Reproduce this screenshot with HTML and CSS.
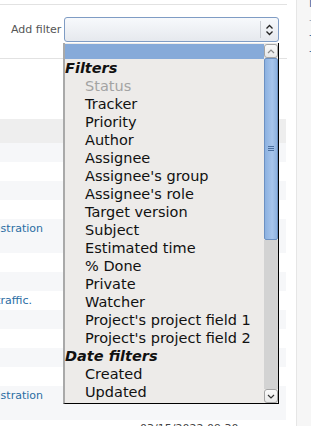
FILE: index.html
```html
<!DOCTYPE html>
<html lang="en">
<head>
<meta charset="utf-8">
<title>Issues</title>
<link rel="stylesheet" href="styles.css">
</head>
<body>
<div class="page">
  <div class="main">
    <div class="filters">
      <span class="add-label">Add filter</span>
      <div class="select">
        <span class="select-value"></span>
        <span class="select-arrow">
          <svg width="9" height="12" viewBox="0 0 9 12"><path d="M1.5 4.5 L4.5 1.5 L7.5 4.5 M1.5 7.5 L4.5 10.5 L7.5 7.5" fill="none" stroke="#222" stroke-width="1.3"/></svg>
        </span>
      </div>
    </div>
    <div class="spacer"></div>
    <div class="issues">
      <div class="row head"></div>
      <div class="row odd"></div>
      <div class="row even"></div>
      <div class="row odd"></div>
      <div class="row even"></div>
      <div class="row odd tall"><div class="subject"><a href="#">Administration</a></div></div>
      <div class="row even"></div>
      <div class="row odd"></div>
      <div class="row even"><div class="subject narrow"><a href="#">Improve traffic.</a></div></div>
      <div class="row odd"></div>
      <div class="row even"></div>
      <div class="row odd"></div>
      <div class="row even"></div>
      <div class="row odd tall"><div class="subject"><a href="#">Administration</a></div></div>
      <div class="row even"><span class="date">03/15/2022 09:30</span></div>
    </div>
  </div>
  <div class="sidebar">
    <a href="#" class="side-link first">Issues</a>
    <a href="#" class="side-link faint">-</a>
    <a href="#" class="side-link">-</a>
    <a href="#" class="side-link">-</a>
  </div>
</div>

<div class="dropdown">
  <div class="options">
    <div class="opt blank selected"></div>
    <div class="group">Filters</div>
    <div class="opt disabled">Status</div>
    <div class="opt">Tracker</div>
    <div class="opt">Priority</div>
    <div class="opt">Author</div>
    <div class="opt">Assignee</div>
    <div class="opt">Assignee's group</div>
    <div class="opt">Assignee's role</div>
    <div class="opt">Target version</div>
    <div class="opt">Subject</div>
    <div class="opt">Estimated time</div>
    <div class="opt">% Done</div>
    <div class="opt">Private</div>
    <div class="opt">Watcher</div>
    <div class="opt">Project's project field 1</div>
    <div class="opt">Project's project field 2</div>
    <div class="group">Date filters</div>
    <div class="opt">Created</div>
    <div class="opt">Updated</div>
  </div>
  <div class="scrollbar">
    <div class="sb-btn">
      <svg width="8" height="5" viewBox="0 0 8 5"><path d="M1 4 L4 1 L7 4" fill="none" stroke="#888" stroke-width="1.2"/></svg>
    </div>
    <div class="sb-thumb">
      <svg width="6" height="7" viewBox="0 0 6 7"><path d="M0 1.5 H6 M0 3.5 H6 M0 5.5 H6" stroke="#4a6e9e" stroke-width="1"/></svg>
    </div>
    <div class="sb-track"></div>
    <div class="sb-btn">
      <svg width="8" height="5" viewBox="0 0 8 5"><path d="M1 1 L4 4 L7 1" fill="none" stroke="#333" stroke-width="1.2"/></svg>
    </div>
  </div>
</div>
</body>
</html>
```

FILE: styles.css
```css
* { box-sizing: border-box; }
html, body { margin: 0; padding: 0; background: #fff; }
body {
  font-family: "DejaVu Sans", Verdana, sans-serif;
  font-size: 11px;
  color: #333;
  width: 311px;
  height: 426px;
  overflow: hidden;
  position: relative;
}
a { color: #2a6da3; text-decoration: none; }

.page { display: flex; height: 426px; }
.main { width: 287px; flex: none; padding-top: 4px; }
.filters {
  border-top: 1px solid #e2e2e2;
  border-bottom: 1px solid #e2e2e2;
  height: 55px;
  display: flex;
  align-items: flex-start;
  padding-top: 12px;
}
.add-label { width: 64px; padding-left: 11px; line-height: 25px; color: #555; font-size: 11px; }
.select {
  width: 215px;
  height: 25px;
  border: 1px solid #7f9cc4;
  border-radius: 3px;
  background: linear-gradient(#f7f9fc, #e6e9ee);
  display: flex;
}
.select-value { flex: 1; }
.select-arrow {
  width: 18px;
  border-left: 1px solid #c8ccd2;
  margin: 3px 0;
  display: flex;
  align-items: center;
  justify-content: center;
}
.spacer { height: 60px; }
.issues { display: flex; flex-direction: column; }
.row { height: 19px; width: 286px; position: relative; }
.row.head { height: 24px; background: #eeeeee; }
.row.odd { background: #f6f7f9; }
.row.even { background: #fff; }
.row.tall { height: 34px; }
.subject {
  width: 43px;
  height: 19px;
  display: flex;
  justify-content: flex-end;
  overflow: hidden;
  white-space: nowrap;
  line-height: 19px;
  font-size: 11px;
}
.subject.narrow { width: 32px; }
.date { display: block; padding: 2px 0 0 140px; color: #444; font-size: 11px; line-height: 14px; }

.sidebar {
  margin-left: 9px;
  flex: 1;
  background: #f6f6f6;
  border-left: 1px solid #e6e6e6;
  padding: 0 0 0 12px;
  display: flex;
  flex-direction: column;
  overflow: hidden;
  white-space: nowrap;
}
.side-link { font-size: 11px; line-height: 15.5px; }
.side-link.first { margin-top: -4px; }
.side-link.faint { color: #8fa7bd; }

.dropdown {
  position: absolute;
  left: 63px;
  top: 43px;
  width: 216px;
  height: 361px;
  background: #edebe9;
  border-left: 2px solid #a9a9a9;
  border-right: 1px solid #000;
  border-bottom: 1px solid #000;
  display: flex;
  font-family: "DejaVu Sans", sans-serif;
  font-size: 14.5px;
  color: #111;
}
.options { flex: 1; overflow: hidden; }
.opt { height: 18px; line-height: 18px; padding-left: 20px; white-space: nowrap; }
.opt.blank { height: 15px; margin-top: 1px; }
.opt.selected { background: #86aad9; }
.opt.disabled { color: #a3a3a3; }
.group { height: 18px; line-height: 18px; font-weight: bold; font-style: italic; padding-left: 0; }

.scrollbar { width: 14px; display: flex; flex-direction: column; padding-top: 1px; }
.sb-btn {
  height: 14px;
  border: 1px solid #a5a5a5;
  border-radius: 3px;
  background: linear-gradient(#fafafa, #e8e8e8);
  display: flex;
  align-items: center;
  justify-content: center;
}
.sb-thumb {
  height: 182px;
  border: 1px solid #6d91c2;
  border-radius: 2px;
  background: linear-gradient(90deg, #8cb1e0, #a7c5ec 60%, #8eb2df);
  display: flex;
  align-items: flex-end;
  justify-content: center;
  padding-bottom: 87px;
}
.sb-track { flex: 1; background: #d3d3d3; }
```
